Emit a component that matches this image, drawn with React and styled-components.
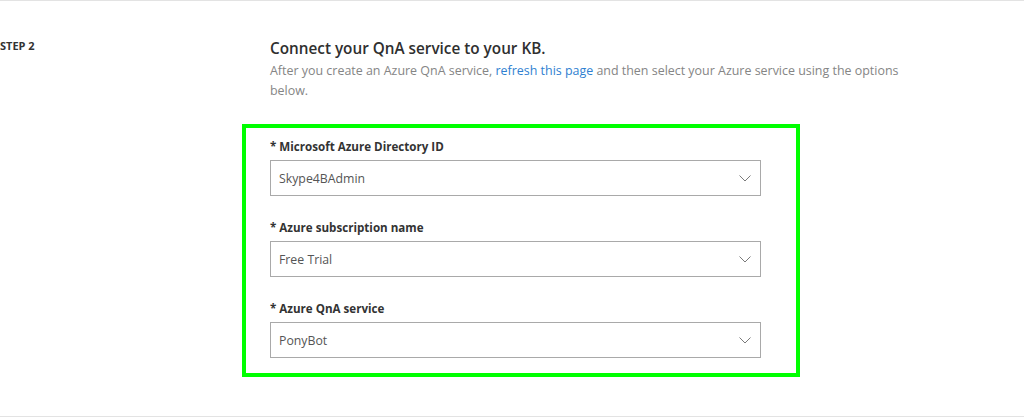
import React from "react";
import styled, { createGlobalStyle } from "styled-components";

const Global = createGlobalStyle`
  html, body { margin: 0; padding: 0; background: #fff; }
  body { font-family: "Open Sans", "Noto Sans", sans-serif; color: #333; }
`;

const Page = styled.div`
  width: 1024px;
  height: 417px;
  box-sizing: border-box;
  border-top: 1px solid #e3e3e3;
  border-bottom: 1px solid #e3e3e3;
  display: grid;
  grid-template-columns: 242px 1fr;
`;

const StepLabel = styled.div`
  padding-top: 37px;
  font-size: 11px;
  font-weight: 700;
  color: #333;
  line-height: 15px;
`;

const Main = styled.div`
  display: flex;
  flex-direction: column;
  padding-top: 37px;
`;

const Intro = styled.div`
  padding-left: 28px;
  width: 640px;
`;

const Heading = styled.h2`
  margin: 0;
  font-size: 15.3px;
  font-weight: 600;
  line-height: 21px;
  color: #2f2f2f;
`;

const Sub = styled.p`
  margin: 2px 0 0;
  font-size: 12.45px;
  line-height: 19.5px;
  color: #858585;
`;

const Link = styled.a`
  color: #2f7fd1;
  text-decoration: none;
`;

const Highlight = styled.div`
  margin-top: 24px;
  width: 558px;
  box-sizing: border-box;
  border: 4px solid #00ff00;
  padding: 11px 35px 15px 24px;
  display: flex;
  flex-direction: column;
  gap: 24px;
`;

const Field = styled.div`
  display: flex;
  flex-direction: column;
  gap: 6px;
`;

const Label = styled.label`
  font-size: 11.6px;
  font-weight: 700;
  line-height: 15px;
  color: #333;
`;

const Select = styled.div`
  height: 36px;
  box-sizing: border-box;
  border: 1px solid #a9a9a9;
  display: flex;
  align-items: center;
  justify-content: space-between;
  padding: 0 9px 0 8px;
  font-size: 12.3px;
  color: #555;
  background: #fff;
`;

const Chevron = () => (
  <svg width="12" height="7" viewBox="0 0 12 7">
    <path d="M0.5 0.5 L6 6 L11.5 0.5" fill="none" stroke="#7a7a7a" strokeWidth="1" />
  </svg>
);

const fields = [
  { label: "* Microsoft Azure Directory ID", value: "Skype4BAdmin" },
  { label: "* Azure subscription name", value: "Free Trial" },
  { label: "* Azure QnA service", value: "PonyBot" },
];

export default function App() {
  return (
    <>
      <Global />
      <Page>
        <StepLabel>STEP 2</StepLabel>
        <Main>
          <Intro>
            <Heading>Connect your QnA service to your KB.</Heading>
            <Sub>
              After you create an Azure QnA service, <Link href="#">refresh this page</Link> and then
              select your Azure service using the options below.
            </Sub>
          </Intro>
          <Highlight>
            {fields.map((f) => (
              <Field key={f.label}>
                <Label>{f.label}</Label>
                <Select>
                  <span>{f.value}</span>
                  <Chevron />
                </Select>
              </Field>
            ))}
          </Highlight>
        </Main>
      </Page>
    </>
  );
}
